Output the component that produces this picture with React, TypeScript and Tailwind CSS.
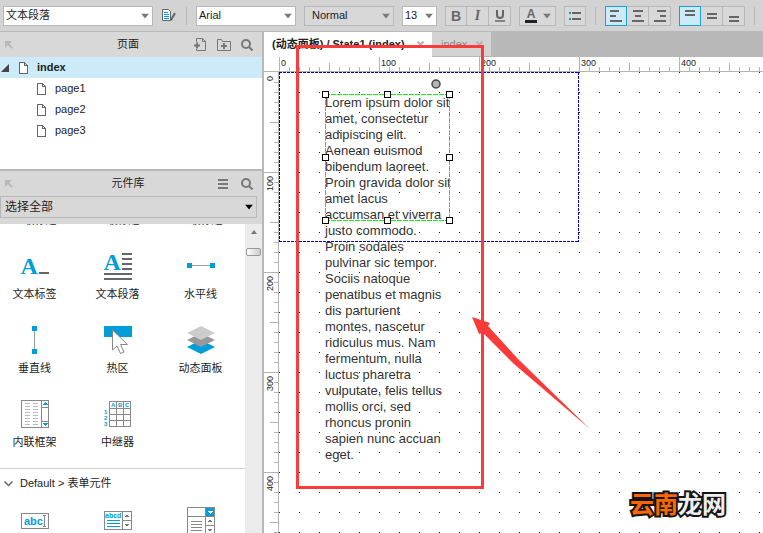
import React, { useEffect, useState } from "react";

const BLUE = "#009dd9";

function Caret({ dark = false }: { dark?: boolean }) {
  return (
    <svg width="8" height="5" viewBox="0 0 8 5" className="pointer-events-none absolute right-1 top-1/2 -translate-y-1/2">
      <path d="M0 0h8L4 5z" fill={dark ? "#000" : "#7a7a7a"} />
    </svg>
  );
}

function Select({ label, options, width, plain, big }: { label: string; options: string[]; width: string; plain?: boolean; big?: boolean }) {
  return (
    <div className={`relative shrink-0 ${width}`}>
      <select
        aria-label={label}
        className={`block w-full appearance-none border border-[#b8b8b8] outline-none ${big ? "h-[22px] pl-1 text-[12px]" : "h-5 text-[11px]"} ${plain ? "bg-[#d8d8d8]" : "bg-white"} ${big ? "" : plain ? "pl-[7px]" : "pl-[2px]"} text-[#1c1c1c]`}
      >
        {options.map((o) => (
          <option key={o}>{o}</option>
        ))}
      </select>
      <Caret dark={big} />
    </div>
  );
}

function Separator() {
  return <div className="mx-px h-[18px] w-px shrink-0 bg-[#b8b8b8]" />;
}

function ToolButton({ label, active, first, children }: { label: string; active?: boolean; first?: boolean; children: React.ReactNode }) {
  return (
    <button
      aria-label={label}
      className={`flex h-5 items-center justify-center border ${first ? "w-[22px]" : "-ml-px w-[23px]"} ${active ? "relative z-10 border-[#1c9fd6] bg-[#cceaf8]" : "border-[#b8b8b8] bg-[#d8d8d8]"}`}
    >
      {children}
    </button>
  );
}

function Bars({ rows }: { rows: [number, number, number][] }) {
  return (
    <svg width="14" height="14" viewBox="0 0 14 14" fill="#666" shapeRendering="crispEdges">
      {rows.map(([x, y, w], i) => (
        <rect key={i} x={x} y={y} width={w} height="2" />
      ))}
    </svg>
  );
}

function Toolbar() {
  return (
    <div className="flex h-8 shrink-0 items-center gap-2 overflow-hidden border-b border-[#b8b8b8] bg-[#d3d3d3] pl-[3px]">
      <Select label="样式" options={["文本段落"]} width="w-[150px]" />
      <button aria-label="管理样式" className="flex w-4 shrink-0 justify-center">
        <svg width="14" height="13" viewBox="0 0 14 13" fill="none">
          <path d="M6.5.5h-6v11h8v-9z" stroke="#666" fill="#f4f4f4" />
          <path d="M2 3.5h4M2 5.5h5M2 7.5h5M2 9.5h5" stroke={BLUE} />
          <path d="M13 4 9 11" stroke="#666" strokeWidth="2" />
          <path d="M8 12.5l.3-2 1.4.8z" fill="#666" />
        </svg>
      </button>
      <Separator />
      <Select label="字体" options={["Arial"]} width="w-[100px]" />
      <Select label="字形" options={["Normal"]} width="w-[90px]" plain />
      <Select label="字号" options={["13"]} width="w-[35px]" />
      <div className="flex shrink-0 text-[14px] leading-none text-[#666]">
        <ToolButton label="粗体" first><b>B</b></ToolButton>
        <ToolButton label="斜体"><i className="font-['Liberation_Serif',serif] font-bold">I</i></ToolButton>
        <ToolButton label="下划线">
          <svg width="10" height="12" viewBox="0 0 10 12" fill="none" stroke="#666">
            <path d="M2 0v5a3 3 0 0 0 6 0V0" strokeWidth="2" />
            <path d="M0 11h10" strokeWidth="1.5" />
          </svg>
        </ToolButton>
      </div>
      <button aria-label="字体颜色" className="relative flex h-5 w-[37px] shrink-0 items-center border border-[#b8b8b8] bg-[#d8d8d8] pl-[5px]">
        <span className="w-3 border-b-[3px] border-[#222] text-center text-[12px] font-bold leading-[11px] text-[#666]">A</span>
        <Caret />
      </button>
      <button aria-label="项目符号" className="flex h-5 w-[22px] shrink-0 items-center justify-center border border-[#b8b8b8] bg-[#d8d8d8]">
        <svg width="12" height="8" viewBox="0 0 12 8" shapeRendering="crispEdges">
          <path d="M0 0h2v2H0zM0 6h2v2H0z" fill={BLUE} />
          <path d="M3 0h9v2H3zM3 6h9v2H3z" fill="#666" />
        </svg>
      </button>
      <Separator />
      <div className="flex shrink-0">
        <ToolButton label="左对齐" active first><Bars rows={[[1, 1, 9], [1, 6, 6], [1, 11, 12]]} /></ToolButton>
        <ToolButton label="居中对齐"><Bars rows={[[2, 1, 10], [4, 6, 6], [1, 11, 12]]} /></ToolButton>
        <ToolButton label="右对齐"><Bars rows={[[4, 1, 9], [7, 6, 6], [1, 11, 12]]} /></ToolButton>
      </div>
      <div className="flex shrink-0">
        <ToolButton label="顶部对齐" active first><Bars rows={[[2, 1, 10], [2, 5, 10]]} /></ToolButton>
        <ToolButton label="垂直居中"><Bars rows={[[2, 4, 10], [2, 8, 10]]} /></ToolButton>
        <ToolButton label="底部对齐"><Bars rows={[[2, 7, 10], [2, 11, 10]]} /></ToolButton>
      </div>
      <Separator />
    </div>
  );
}

function CollapseIcon() {
  return (
    <svg width="8" height="8" viewBox="0 0 8 8" fill="none" stroke="#b8b8b8">
      <path d="M0 0h7L5 2 2 5 0 7z" fill="#b8b8b8" stroke="none" />
      <path d="M2 4.500 4.500 2" stroke="#d8d8d8" strokeWidth="0" />
      <path d="m2 2 5 5" strokeWidth="2" />
    </svg>
  );
}

function SearchIcon() {
  return (
    <svg width="12" height="12" viewBox="0 0 12 12" fill="none" stroke="#777" strokeWidth="2">
      <circle cx="5" cy="5" r="4" />
      <path d="m8 8 3.5 3.5" />
    </svg>
  );
}

function PanelHeader({ title, children }: { title: string; children: React.ReactNode }) {
  return (
    <div className="grid h-[25px] shrink-0 grid-cols-[76px_1fr_82px] items-center bg-[#d8d8d8]">
      <button aria-label="折叠" className="pl-[5px]"><CollapseIcon /></button>
      <h2 className="text-center text-[11px] text-[#222]">{title}</h2>
      <div className="flex items-center justify-end gap-[10px] pr-[9px]">{children}</div>
    </div>
  );
}

function PageIcon() {
  return (
    <svg width="9" height="12" viewBox="0 0 9 12" fill="#fff" stroke="#666" shapeRendering="crispEdges">
      <path d="M.5.5h5l3 3v8h-8zM5.5.5v3h3" />
    </svg>
  );
}

function PagesPanel() {
  return (
    <section className="flex h-[139px] shrink-0 flex-col border-b-2 border-[#b8b8b8]">
      <PanelHeader title="页面">
        <button aria-label="添加页面">
          <svg width="13" height="13" viewBox="0 0 13 13" fill="none" stroke="#777">
            <path d="M2.5 4V.5h6l3 3v9h-9V11M8.5.5v3h3" />
            <path d="M0 7.5h6M3 4.5v6" strokeWidth="2" />
          </svg>
        </button>
        <button aria-label="添加文件夹">
          <svg width="14" height="12" viewBox="0 0 14 12" fill="none" stroke="#777">
            <path d="M.5 11.5V.5h4l1 2h8v9z" />
            <path d="M4 7h6M7 4v6" strokeWidth="2" />
          </svg>
        </button>
        <button aria-label="搜索页面"><SearchIcon /></button>
      </PanelHeader>
      <ul className="text-[11px] text-[#1c1c1c]">
        <li>
          <a href="#index" className="flex h-[21px] items-center bg-[#cceaf8] pl-px font-bold">
            <svg width="8" height="8" viewBox="0 0 8 8"><path d="M8 0v8H0z" fill="#444" /></svg>
            <span className="ml-[10px] mr-[9px]"><PageIcon /></span>
            index
          </a>
          <ul>
            {["page1", "page2", "page3"].map((p) => (
              <li key={p}>
                <a href={`#${p}`} className="flex h-[21px] items-center gap-[9px] pl-[37px]"><PageIcon />{p}</a>
              </li>
            ))}
          </ul>
        </li>
      </ul>
    </section>
  );
}

const serif = "'Liberation Serif', serif";
const sans = "'Liberation Sans', Arial, sans-serif";

const icons: Record<string, React.ReactNode> = {
  文本标签: (
    <>
      <text x="-0.5" y="22" fontFamily={serif} fontWeight="bold" fontSize="24" fill={BLUE}>A</text>
      <path d="M18 20h10v2H18z" fill="#666" />
    </>
  ),
  文本段落: (
    <>
      <text x="-0.5" y="18" fontFamily={serif} fontWeight="bold" fontSize="24" fill={BLUE}>A</text>
      <path d="M18 1h10v2H18zM18 6h10v2H18zM18 11h10v2H18zM18 16h10v2H18zM0 21h28v2H0zM0 26h28v2H0z" fill="#666" />
    </>
  ),
  水平线: (
    <>
      <path d="M4 13h20v1H4z" fill="#999" />
      <path d="M0 11h5v5H0zM23 11h5v5h-5z" fill={BLUE} />
    </>
  ),
  垂直线: (
    <>
      <path d="M13 4h1v20h-1z" fill="#999" />
      <path d="M11 0h5v5h-5zM11 23h5v5h-5z" fill={BLUE} />
    </>
  ),
  热区: (
    <>
      <path d="M0 0h28v11H0z" fill={BLUE} />
      <path d="M8.5 4v20l4.500-4 3.500 7.500 3.500-1.500-3.500-7.500h7z" fill="#fff" stroke="#888" shapeRendering="auto" />
    </>
  ),
  动态面板: (
    <g shapeRendering="auto">
      <path d="m14 14 14 7-14 7-14-7z" fill={BLUE} />
      <path d="m14 7 14 7-14 7-14-7z" fill="#999" />
      <path d="m14 0 14 7-14 7-14-7z" fill="#ccc" />
    </g>
  ),
  内联框架: (
    <>
      <path d="M.5.5h27v27H.5zM20.5.5v27M20.5 7.5h7M20.5 21.5h7" fill="none" stroke="#888" />
      <path d="M4 3.5h5m3 0h5M4 6.5h5m3 0h5M4 9.5h5m3 0h5M4 12.5h5m3 0h5M4 15.5h5m3 0h5M4 18.5h5m3 0h5M4 21.5h5m3 0h5M4 24.5h5m3 0h5" stroke="#bbb" />
      <path d="M24 2l3 3h-6zM24 26l3-3h-6z" fill={BLUE} />
    </>
  ),
  中继器: (
    <>
      <path d="M5.5 1.5h21v25h-21zM12.5 1.5v25M19.5 1.5v25M5.5 8.5h21M5.5 14.5h21M5.5 20.5h21" fill="#fff" stroke="#888" />
      <g fontFamily={sans} fontWeight="bold" fontSize="6" fill={BLUE}>
        <text x="7" y="7">A</text><text x="14" y="7">B</text><text x="21" y="7">C</text>
        <text x="0" y="14">1</text><text x="0" y="20">2</text><text x="0" y="26">3</text>
      </g>
    </>
  ),
  文本框: (
    <>
      <path d="M.5 6.5h27v15H.5z" fill="#fff" stroke="#888" />
      <text x="3" y="18" fontFamily={sans} fontWeight="bold" fontSize="11" fill={BLUE}>abc</text>
      <path d="M22 8.5h3M22 19.5h3M23.5 9v10" stroke="#888" />
    </>
  ),
  多行文本框: (
    <>
      <path d="M.5 4.5h27v18H.5zM18.5 4.5v18M18.5 13.5h9" fill="#fff" stroke="#888" />
      <text x="1" y="11" fontFamily={sans} fontWeight="bold" fontSize="7" fill={BLUE}>abcd</text>
      <path d="M3 13.5h13M3 16.5h13M3 19.5h13" stroke={BLUE} />
      <path d="M23 7l2 3h-4zM23 20l2-3h-4z" fill="#777" />
    </>
  ),
  下拉列表框: (
    <>
      <path d="M.5.5h27v31H.5zM.5 9.5h27M18.5.5v31M18.5 18.5h9" fill="#fff" stroke="#888" />
      <path d="M19 1h8v8h-8z" fill={BLUE} />
      <path d="M21 4h5l-2.5 3z" fill="#fff" />
      <path d="M4 14.5h11M4 17.5h11M4 20.5h11M4 23.5h11" stroke="#888" />
      <path d="M23 12l2 3h-4zM23 25l2-3h-4z" fill="#777" />
    </>
  ),
};

function Widget({ name }: { name: string }) {
  return (
    <button className="flex h-[74px] flex-col items-center gap-[6px] text-[11px] leading-4 text-[#1c1c1c]">
      <svg width="28" height="28" viewBox="0 0 28 28" className="shrink-0 overflow-visible" shapeRendering="crispEdges">{icons[name]}</svg>
      {name}
    </button>
  );
}

function FormWidget({ name }: { name: string }) {
  return (
    <button aria-label={name} className="flex h-8 justify-center">
      <svg width="28" height="32" viewBox="0 0 28 32" shapeRendering="crispEdges">{icons[name]}</svg>
    </button>
  );
}

function LibraryPanel() {
  return (
    <section className="flex min-h-0 flex-1 flex-col">
      <PanelHeader title="元件库">
        <button aria-label="选项" className="mr-[3px]">
          <svg width="10" height="10" viewBox="0 0 10 10" shapeRendering="crispEdges"><path d="M0 0h10v2H0zM0 4h10v2H0zM0 8h10v2H0z" fill="#777" /></svg>
        </button>
        <button aria-label="搜索元件"><SearchIcon /></button>
      </PanelHeader>
      <div className="shrink-0 bg-[#d8d8d8] pb-[6px]">
        <Select label="元件库" options={["选择全部"]} width="w-[257px]" plain big />
      </div>
      <div className="flex min-h-0 flex-1">
        <div className="min-w-0 flex-1 overflow-hidden">
          <div className="-ml-[7px] -mt-3 grid h-10 grid-cols-[83px_83px_83px] text-center text-[11px] leading-4 text-[#1c1c1c]">
            <span>一级标题</span><span>二级标题</span><span>三级标题</span>
          </div>
          <div className="-ml-[7px] grid grid-cols-[83px_83px_83px]">
            {["文本标签", "文本段落", "水平线", "垂直线", "热区", "动态面板", "内联框架", "中继器"].map((n) => <Widget key={n} name={n} />)}
          </div>
          <button className="-mt-[6px] flex h-[30px] w-full items-center gap-[7px] border-t border-[#ccc] pl-1 text-[11px] text-[#1c1c1c]">
            <svg width="9" height="6" viewBox="0 0 9 6" fill="none" stroke="#666" strokeWidth="1.5"><path d="m.5.5 4 4 4-4" /></svg>
            Default &gt; 表单元件
          </button>
          <div className="-ml-[7px] mt-[9px] grid grid-cols-[83px_83px_83px]">
            {["文本框", "多行文本框", "下拉列表框"].map((n) => <FormWidget key={n} name={n} />)}
          </div>
        </div>
        <div className="flex w-[17px] shrink-0 flex-col items-center bg-[#ebebeb] pt-[6px]">
          <svg width="6" height="4" viewBox="0 0 6 4"><path d="M3 0l3 4H0z" fill="#777" /></svg>
          <div className="mt-[14px] h-2 w-[15px] rounded-[2px] border border-[#999] bg-linear-to-r from-white to-[#ccc]" />
        </div>
      </div>
    </section>
  );
}

function Tabs() {
  return (
    <div className="flex h-[25px] shrink-0 bg-[#b8b8b8] text-[11px]">
      <div className="flex w-[168px] items-center justify-between bg-white pl-2 pr-2 font-bold text-[#222]">
        <button className="whitespace-nowrap">(动态面板) / State1 (index)</button>
        <CloseIcon />
      </div>
      <div className="flex w-[59px] items-center justify-between border-b border-[#b8b8b8] bg-[#d3d3d3] pl-[9px] pr-2 text-[#888]">
        <button>index</button>
        <CloseIcon />
      </div>
    </div>
  );
}

function CloseIcon() {
  return (
    <button aria-label="关闭">
      <svg width="7" height="7" viewBox="0 0 7 7" stroke="#b4b4b4" strokeWidth="2"><path d="m.5.5 6 6m0-6-6 6" /></svg>
    </button>
  );
}

const RULER_LEFT = 279;
const RULER_TOP = 72;
const marksUpTo = (length: number) => Array.from({ length: Math.max(0, Math.ceil(length / 10)) }, (_, i) => i * 10);
const tickLength = (m: number) => (m % 100 === 0 ? 14 : m % 50 === 0 ? 8 : 4);

function useWindowSize() {
  const [size, setSize] = useState({ width: window.innerWidth, height: window.innerHeight });
  useEffect(() => {
    const update = () => setSize({ width: window.innerWidth, height: window.innerHeight });
    window.addEventListener("resize", update);
    return () => window.removeEventListener("resize", update);
  }, []);
  return size;
}

function HorizontalRuler({ length }: { length: number }) {
  const marks = marksUpTo(length);
  return (
    <div className="h-[15px] shrink-0 overflow-hidden border-b border-[#b4b4b4] pl-[15px]">
      <svg width="100%" height="14" className="block" shapeRendering="crispEdges">
        {marks.map((m) => <rect key={m} x={m} y={14 - tickLength(m)} width="1" height={tickLength(m)} fill="#b4b4b4" />)}
        {marks.filter((m) => m % 100 === 0).map((m) => (
          <text key={m} x={m + 2} y="9" fontSize="9" fill="#222" fontFamily={sans}>{m}</text>
        ))}
      </svg>
    </div>
  );
}

function VerticalRuler({ length }: { length: number }) {
  const marks = marksUpTo(length);
  return (
    <div className="w-[15px] shrink-0 overflow-hidden border-r border-[#b4b4b4]">
      <svg width="14" height="100%" className="block" shapeRendering="crispEdges">
        {marks.slice(1).map((m) => <rect key={m} y={m} x={14 - tickLength(m)} height="1" width={tickLength(m)} fill="#b4b4b4" />)}
        {marks.filter((m) => m % 100 === 0).map((m) => (
          <text key={m} transform={`translate(9 ${m + 4}) rotate(-90)`} textAnchor="end" fontSize="9" fill="#222" fontFamily={sans}>{m}</text>
        ))}
      </svg>
    </div>
  );
}

const paragraph = [
  "Lorem ipsum dolor sit", "amet, consectetur", "adipiscing elit.", "Aenean euismod", "bibendum laoreet.", "Proin gravida dolor sit",
  "amet lacus", "accumsan et viverra", "justo commodo.", "Proin sodales", "pulvinar sic tempor.", "Sociis natoque", "penatibus et magnis",
  "dis parturient", "montes, nascetur", "ridiculus mus. Nam", "fermentum, nulla", "luctus pharetra", "vulputate, felis tellus",
  "mollis orci, sed", "rhoncus pronin", "sapien nunc accuan", "eget.",
];

const handles = [[46, 22], [108, 22], [170, 22], [46, 85], [170, 85], [46, 148], [108, 148], [170, 148]];

function Canvas() {
  return (
    <div className="relative min-w-0 flex-1 overflow-hidden">
      <svg width="100%" height="100%" className="absolute inset-0" shapeRendering="crispEdges">
        <defs>
          <pattern id="dots" width="20" height="20" patternUnits="userSpaceOnUse"><rect width="1" height="1" fill="#00f" /></pattern>
        </defs>
        <rect width="100%" height="100%" fill="url(#dots)" />
        <path d="M0 .5h300M299.500 0v170M0 169.500h300M.5 0v170" fill="none" stroke="#0000dd" strokeDasharray="3 1" />
      </svg>
      <p className="absolute left-[46px] top-[23px] whitespace-pre text-[13px] leading-4 text-[#333]">{paragraph.join("\n")}</p>
      <svg width="300" height="170" className="absolute left-0 top-0" shapeRendering="crispEdges">
        <path d="M46 22.500h125M46 148.500h125M46.500 22v127M170.500 22v127" fill="none" stroke="#0f0" strokeDasharray="5 1" />
        {handles.map(([x, y]) => <rect key={`${x}-${y}`} x={x - 2.5} y={y - 2.5} width="6" height="6" fill="#fff" stroke="#000" />)}
        <circle cx="157" cy="12" r="4" fill="#b4b4b4" stroke="#444" strokeWidth="1.5" shapeRendering="auto" />
      </svg>
    </div>
  );
}

export default function App() {
  const { width, height } = useWindowSize();
  return (
    <div className="relative flex h-screen flex-col overflow-hidden bg-white font-['Liberation_Sans','Noto_Sans_CJK_SC',sans-serif]">
      <Toolbar />
      <div className="flex min-h-0 flex-1">
        <aside className="flex w-[264px] shrink-0 flex-col border-r-2 border-[#b8b8b8]">
          <PagesPanel />
          <LibraryPanel />
        </aside>
        <main className="flex min-w-0 flex-1 flex-col">
          <Tabs />
          <HorizontalRuler length={width - RULER_LEFT} />
          <div className="flex min-h-0 flex-1">
            <VerticalRuler length={height - RULER_TOP} />
            <Canvas />
          </div>
        </main>
      </div>
      <div className="pointer-events-none absolute left-[296px] top-[45px] h-[444px] w-[188px] border-[3px] border-[#fb3a3a]" />
      <svg width="120" height="114" viewBox="0 0 120 114" className="pointer-events-none absolute left-[472px] top-[317px]">
        <path d="M0 0 18 6 16 9 46 42 118 112 42 47 11 16 7 17z" fill="#fb3a3a" />
      </svg>
      <div className="pointer-events-none absolute bottom-4 right-[37px] text-[24px] font-bold leading-6 text-[#eee] [-webkit-text-stroke:4px_#151515] [paint-order:stroke_fill]">
        <span className="text-[#f60]">云南</span>龙网
      </div>
    </div>
  );
}
